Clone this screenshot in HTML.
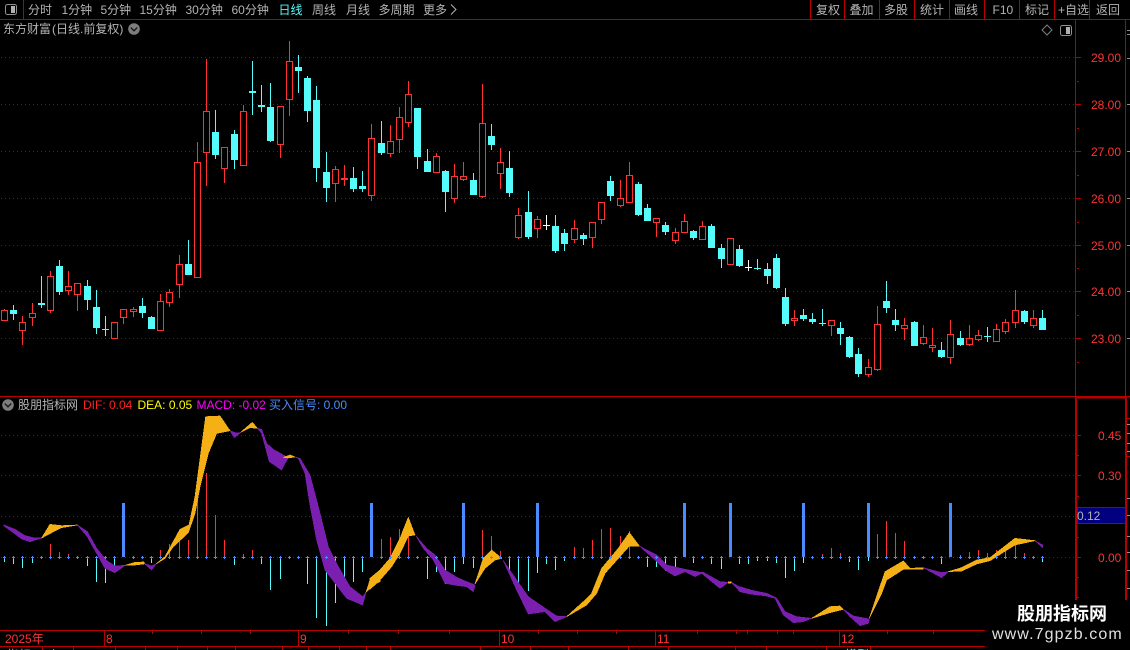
<!DOCTYPE html>
<html lang="zh"><head><meta charset="utf-8"><title>股朋指标网</title>
<style>
html,body{margin:0;padding:0;background:#000;width:1130px;height:650px;overflow:hidden}
svg{display:block}
text{font-family:"Liberation Sans","WenQuanYi Zen Hei","Noto Sans CJK SC",sans-serif;font-size:12px;white-space:pre}
.g{fill:#b4b4b4}.r{fill:#ff3232}
</style></head><body>
<svg xmlns="http://www.w3.org/2000/svg" width="1130" height="650" viewBox="0 0 1130 650">
<rect width="1130" height="650" fill="#000"/>
<!-- grid -->
<path shape-rendering="crispEdges" stroke="#a80000" stroke-dasharray="1 3" fill="none" d="M1 57.5H1075M1 104.5H1075M1 151.5H1075M1 198.5H1075M1 245.5H1075M1 291.5H1075M1 338.5H1075M1 435.5H1075M1 475.5H1075M1 516.5H1075M1 557.5H1075"/>
<!-- wicks -->
<g shape-rendering="crispEdges" fill="none">
<path stroke="#ff3232" d="M4.5 309V311M22.5 316V345M32.5 303V326M50.5 271V313M68.5 271V295M77.5 283V311M123.5 309V324M133.5 307V317M160.5 294V331M169.5 289V307M179.5 255V298M197.5 142V278M206.5 59V186M224.5 147V183M243.5 105V166M280.5 106V158M289.5 41V116M335.5 166V202M344.5 165V186M371.5 124V201M390.5 125V157M399.5 107V153M408.5 81V127M436.5 153V173M454.5 164V203M463.5 162V181M482.5 84V198M500.5 148V189M518.5 208V239M537.5 216V238M574.5 220V243M592.5 222V248M601.5 202V224M620.5 180V207M629.5 162V203M656.5 218V237M675.5 228V244M684.5 214V233M702.5 221V240M794.5 310V326M831.5 320V336M868.5 359V377M877.5 306V371M904.5 318V340M923.5 325V345M932.5 328V352M950.5 320V364M969.5 325V346M978.5 330V341M996.5 324V342M1005.5 319V334M1015.5 290V328M1033.5 310V328"/>
<path stroke="#54fcfc" d="M13.5 305V320M41.5 276V308M59.5 260V295M87.5 280V310M96.5 290V334M105.5 316V336M142.5 298V318M151.5 316V329M188.5 240V275M215.5 110V159M234.5 130V169M252.5 61V115M261.5 85V112M270.5 83V142M298.5 55V93M307.5 76V122M316.5 86V182M326.5 152V202M353.5 167V192M362.5 171V192M381.5 121V155M417.5 108V169M427.5 149V172M445.5 170V212M473.5 173V195M491.5 124V150M509.5 151V197M528.5 191V239M555.5 215V253M564.5 229V251M583.5 233V245M610.5 176V201M638.5 182V216M647.5 204V221M665.5 222V235M693.5 230V240M711.5 224V248M721.5 244V268M739.5 245V267M757.5 259V270M767.5 263V284M776.5 254V289M785.5 288V326M803.5 309V321M812.5 313V324M822.5 309V326M840.5 322V345M849.5 336V358M858.5 348V377M886.5 281V313M895.5 309V331M914.5 321V346M941.5 342V358M960.5 331V346M987.5 327V342M1024.5 310V324M1042.5 310V330"/>
<path stroke="#fff" d="M546.5 215V230M543 225.5H550M748.5 260V271M745 267.5H752"/>
<!-- red bodies -->
<path stroke="#ff3232" fill="#000" d="M1.5 310.5h6v10h-6zM19.5 322.5h6v8h-6zM29.5 313.5h6v4h-6zM47.5 276.5h6v34h-6zM65.5 286.5h6v4h-6zM74.5 283.5h6v11h-6zM111.5 322.5h6v16h-6zM120.5 309.5h6v8h-6zM130.5 309.5h6v2h-6zM157.5 301.5h6v29h-6zM166.5 292.5h6v10h-6zM176.5 264.5h6v20h-6zM194.5 162.5h6v115h-6zM203.5 111.5h6v41h-6zM221.5 147.5h6v21h-6zM240.5 111.5h6v54h-6zM277.5 106.5h6v38h-6zM286.5 61.5h6v38h-6zM332.5 169.5h6v14h-6zM341.5 178.5h6v1h-6zM368.5 138.5h6v57h-6zM387.5 141.5h6v12h-6zM396.5 117.5h6v22h-6zM405.5 94.5h6v28h-6zM433.5 156.5h6v16h-6zM451.5 176.5h6v22h-6zM460.5 176.5h6v3h-6zM479.5 123.5h6v73h-6zM497.5 162.5h6v11h-6zM515.5 215.5h6v22h-6zM534.5 219.5h6v9h-6zM571.5 228.5h6v11h-6zM589.5 222.5h6v15h-6zM598.5 202.5h6v17h-6zM617.5 198.5h6v7h-6zM626.5 175.5h6v27h-6zM653.5 218.5h6v4h-6zM672.5 232.5h6v8h-6zM681.5 221.5h6v11h-6zM699.5 226.5h6v13h-6zM727.5 238.5h6v26h-6zM791.5 318.5h6v2h-6zM828.5 320.5h6v5h-6zM865.5 367.5h6v7h-6zM874.5 324.5h6v45h-6zM901.5 325.5h6v3h-6zM920.5 337.5h6v6h-6zM929.5 345.5h6v2h-6zM947.5 334.5h6v23h-6zM966.5 338.5h6v6h-6zM975.5 335.5h6v4h-6zM993.5 329.5h6v12h-6zM1002.5 322.5h6v9h-6zM1012.5 310.5h6v12h-6zM1030.5 318.5h6v7h-6z"/>
<!-- cyan bodies -->
<path fill="#54fcfc" stroke="none" d="M10 310h7v4h-7zM38 303h7v2h-7zM56 266h7v26h-7zM84 286h7v14h-7zM93 307h7v21h-7zM102 329h7v1h-7zM139 306h7v7h-7zM148 317h7v12h-7zM185 264h7v11h-7zM212 132h7v23h-7zM231 134h7v26h-7zM249 91h7v2h-7zM258 105h7v2h-7zM267 107h7v34h-7zM295 67h7v4h-7zM304 78h7v33h-7zM313 100h7v68h-7zM323 172h7v16h-7zM350 178h7v11h-7zM359 186h7v3h-7zM378 143h7v10h-7zM414 108h7v49h-7zM424 161h7v11h-7zM442 171h7v21h-7zM470 180h7v15h-7zM488 136h7v9h-7zM506 168h7v25h-7zM525 212h7v25h-7zM552 226h7v25h-7zM561 233h7v11h-7zM580 235h7v4h-7zM607 181h7v15h-7zM635 184h7v31h-7zM644 208h7v13h-7zM662 225h7v7h-7zM690 231h7v7h-7zM708 226h7v22h-7zM718 248h7v11h-7zM736 249h7v17h-7zM754 268h7v1h-7zM764 269h7v7h-7zM773 258h7v30h-7zM782 297h7v27h-7zM800 315h7v4h-7zM809 319h7v3h-7zM819 323h7v1h-7zM837 328h7v6h-7zM846 337h7v20h-7zM855 354h7v20h-7zM883 301h7v7h-7zM892 320h7v5h-7zM911 322h7v24h-7zM938 350h7v7h-7zM957 338h7v7h-7zM984 336h7v1h-7zM1021 311h7v11h-7zM1039 318h7v12h-7z"/>
</g>
<!-- MACD bars -->
<path shape-rendering="crispEdges" fill="none" stroke="#ff3232" d="M50.5 557V544M59.5 557V552M68.5 557V554M160.5 557V550M169.5 557V544M179.5 557V531M188.5 557V540M197.5 557V493M206.5 557V473M215.5 557V515M224.5 557V540M243.5 557V554M252.5 557V550M381.5 557V539M390.5 557V537M399.5 557V529M408.5 557V522M482.5 557V530M491.5 557V536M500.5 557V551M574.5 557V547M583.5 557V548M592.5 557V540M601.5 557V529M610.5 557V528M620.5 557V536M629.5 557V531M822.5 557V554M831.5 557V548M840.5 557V553M877.5 557V534M886.5 557V521M895.5 557V533M904.5 557V541M960.5 557V555M969.5 557V552M978.5 557V550M987.5 557V553M996.5 557V550M1005.5 557V550M1015.5 557V544M1024.5 557V553"/>
<path shape-rendering="crispEdges" fill="none" stroke="#54fcfc" d="M4.5 557V562M13.5 557V564M22.5 557V568M32.5 557V563M87.5 557V566M96.5 557V582M105.5 557V583M114.5 557V572M151.5 557V563M234.5 557V565M261.5 557V564M270.5 557V590M280.5 557V579M307.5 557V584M316.5 557V618M326.5 557V626M335.5 557V603M344.5 557V590M353.5 557V582M362.5 557V572M417.5 557V559M427.5 557V579M436.5 557V572M445.5 557V584M454.5 557V572M463.5 557V564M473.5 557V568M509.5 557V572M518.5 557V584M528.5 557V591M537.5 557V573M546.5 557V564M555.5 557V570M564.5 557V561M647.5 557V567M656.5 557V567M665.5 557V571M675.5 557V569M693.5 557V563M711.5 557V564M721.5 557V569M739.5 557V564M748.5 557V564M757.5 557V561M767.5 557V561M776.5 557V563M785.5 557V578M794.5 557V571M803.5 557V563M849.5 557V562M858.5 557V570M868.5 557V561M941.5 557V564M1042.5 557V562"/>
<path shape-rendering="crispEdges" fill="none" stroke="#4a8cff" stroke-width="3" d="M123.5 557V503M371.5 557V503M463.5 557V503M537.5 557V503M684.5 557V503M730.5 557V503M803.5 557V503M868.5 557V503M950.5 557V503"/>
<!-- ribbon -->
<g shape-rendering="crispEdges" stroke-width="2" stroke-linejoin="round">
<g transform="translate(0 390) scale(.33333)">
<g fill="#7a1fb0" stroke="#7a1fb0">
<polygon points="12,405 45,418 75,437 100,443 125,444 90,455 65,447 40,428 12,408"/>
<polygon points="232,405 262,425 290,475 320,512 345,528 375,526 345,548 315,535 290,490 262,440"/>
<polygon points="432,520 455,528 468,522 455,540"/>
<polygon points="690,122 705,128 722,128 703,143"/>
<polygon points="772,115 785,118 800,160 820,178 864,203 845,240 808,215 785,130"/>
<polygon points="885,201 900,205 930,255 955,350 985,470 1015,530 1050,590 1088,620 1098,607 1088,645 1040,625 975,540 950,450 930,345 915,250 895,205"/>
</g>
<g fill="#f5b015" stroke="#f5b015">
<polygon points="125,444 150,403 185,407 232,405 185,413 155,428"/>
<polygon points="375,526 405,517 432,516 432,522 405,525"/>
<polygon points="468,522 495,500 540,418 567,405 585,320 617,80 660,78 690,122 650,130 625,190 600,290 585,370 565,428 520,470 495,505"/>
<polygon points="722,127 757,97 772,115 750,113"/>
<polygon points="850,202 870,195 885,201 864,204"/>
<polygon points="1098,607 1110,570 1140,540 1140,575 1120,585"/>
</g>
</g>
<g transform="translate(370 490) scale(.33333)">
<g fill="#7a1fb0" stroke="#7a1fb0">
<polygon points="138,138 170,175 195,195 225,240 260,262 290,275 315,285 310,305 290,290 265,287 225,280 190,210 160,175"/>
<polygon points="400,212 440,270 475,320 530,358 560,378 590,380 555,395 525,365 475,372 440,300"/>
<polygon points="808,168 830,180 860,195 890,225 945,238 990,247 1000,247 1050,275 1075,277 1050,295 995,250 975,260 945,245 915,258 885,240 850,205"/>
<polygon points="1083,276 1115,295 1140,298 1140,312 1110,305"/>
</g>
<g fill="#f5b015" stroke="#f5b015">
<polygon points="0,265 30,240 60,205 90,145 115,82 135,135 115,138 90,190 65,230 30,270 0,298"/>
<polygon points="315,282 340,205 365,180 395,205 375,210 345,235"/>
<polygon points="590,380 640,335 665,310 695,235 745,175 778,128 808,168 778,168 745,205 705,250 680,310 650,345"/>
<polygon points="1075,275 1083,275 1083,279 1075,279"/>
</g>
</g>
<g transform="translate(740 490) scale(.33333)">
<g fill="#7a1fb0" stroke="#7a1fb0">
<polygon points="0,290 30,300 80,310 110,325 135,365 170,380 215,385 190,395 160,398 130,375 105,325 80,318 30,312 0,305"/>
<polygon points="310,358 340,378 388,387 385,400 360,407 330,380"/>
<polygon points="550,233 605,248 625,245 605,263"/>
<polygon points="885,152 908,165 908,173"/>
</g>
<g fill="#f5b015" stroke="#f5b015">
<polygon points="215,385 270,350 300,348 310,358 270,368"/>
<polygon points="388,385 435,245 490,213 510,235 550,233 550,238 490,238 440,270 425,310"/>
<polygon points="625,245 665,233 710,210 750,203 825,145 885,152 825,165 750,212 710,222 665,243"/>
</g>
</g>
</g>
<!-- baseline markers -->
<path shape-rendering="crispEdges" fill="none" stroke="#4a8cff" d="M3 557.5h3M4.5 556v3M12 557.5h3M13.5 556v3M21 557.5h3M22.5 556v3M31 557.5h3M32.5 556v3M40 557.5h3M41.5 556v3M49 557.5h3M50.5 556v3M58 557.5h3M59.5 556v3M67 557.5h3M68.5 556v3M76 557.5h3M77.5 556v3M86 557.5h3M87.5 556v3M95 557.5h3M96.5 556v3M104 557.5h3M105.5 556v3M113 557.5h3M114.5 556v3M132 557.5h3M133.5 556v3M141 557.5h3M142.5 556v3M150 557.5h3M151.5 556v3M159 557.5h3M160.5 556v3M168 557.5h3M169.5 556v3M178 557.5h3M179.5 556v3M187 557.5h3M188.5 556v3M196 557.5h3M197.5 556v3M205 557.5h3M206.5 556v3M214 557.5h3M215.5 556v3M223 557.5h3M224.5 556v3M233 557.5h3M234.5 556v3M242 557.5h3M243.5 556v3M251 557.5h3M252.5 556v3M260 557.5h3M261.5 556v3M269 557.5h3M270.5 556v3M279 557.5h3M280.5 556v3M288 557.5h3M289.5 556v3M297 557.5h3M298.5 556v3M306 557.5h3M307.5 556v3M315 557.5h3M316.5 556v3M325 557.5h3M326.5 556v3M334 557.5h3M335.5 556v3M343 557.5h3M344.5 556v3M352 557.5h3M353.5 556v3M361 557.5h3M362.5 556v3M380 557.5h3M381.5 556v3M389 557.5h3M390.5 556v3M398 557.5h3M399.5 556v3M407 557.5h3M408.5 556v3M416 557.5h3M417.5 556v3M426 557.5h3M427.5 556v3M435 557.5h3M436.5 556v3M444 557.5h3M445.5 556v3M453 557.5h3M454.5 556v3M472 557.5h3M473.5 556v3M481 557.5h3M482.5 556v3M490 557.5h3M491.5 556v3M499 557.5h3M500.5 556v3M508 557.5h3M509.5 556v3M517 557.5h3M518.5 556v3M527 557.5h3M528.5 556v3M545 557.5h3M546.5 556v3M554 557.5h3M555.5 556v3M563 557.5h3M564.5 556v3M573 557.5h3M574.5 556v3M582 557.5h3M583.5 556v3M591 557.5h3M592.5 556v3M600 557.5h3M601.5 556v3M609 557.5h3M610.5 556v3M619 557.5h3M620.5 556v3M628 557.5h3M629.5 556v3M637 557.5h3M638.5 556v3M646 557.5h3M647.5 556v3M655 557.5h3M656.5 556v3M664 557.5h3M665.5 556v3M674 557.5h3M675.5 556v3M692 557.5h3M693.5 556v3M701 557.5h3M702.5 556v3M710 557.5h3M711.5 556v3M720 557.5h3M721.5 556v3M738 557.5h3M739.5 556v3M747 557.5h3M748.5 556v3M756 557.5h3M757.5 556v3M766 557.5h3M767.5 556v3M775 557.5h3M776.5 556v3M784 557.5h3M785.5 556v3M793 557.5h3M794.5 556v3M811 557.5h3M812.5 556v3M821 557.5h3M822.5 556v3M830 557.5h3M831.5 556v3M839 557.5h3M840.5 556v3M848 557.5h3M849.5 556v3M857 557.5h3M858.5 556v3M876 557.5h3M877.5 556v3M885 557.5h3M886.5 556v3M894 557.5h3M895.5 556v3M903 557.5h3M904.5 556v3M913 557.5h3M914.5 556v3M922 557.5h3M923.5 556v3M931 557.5h3M932.5 556v3M940 557.5h3M941.5 556v3M959 557.5h3M960.5 556v3M968 557.5h3M969.5 556v3M977 557.5h3M978.5 556v3M986 557.5h3M987.5 556v3M995 557.5h3M996.5 556v3M1004 557.5h3M1005.5 556v3M1014 557.5h3M1015.5 556v3M1023 557.5h3M1024.5 556v3M1032 557.5h3M1033.5 556v3M1041 557.5h3M1042.5 556v3"/>
<!-- frame lines -->
<g shape-rendering="crispEdges" fill="none" stroke="#b80000">
<path d="M0 19.5H1130M23.5 0V19M810.5 0V19M844.5 0V19M879.5 0V19M914.5 0V19M949.5 0V19M984.5 0V19M1019.5 0V19M1054.5 0V19M1089.5 0V19"/>
<path d="M0 396.5H1130M0 630.5H1130M0 646.5H1130"/>
<path d="M1075.5 19V397M1125.5 19V397"/>
<path stroke-width="2" d="M1076 397V650M1126 397V650M1076 397.5H1126"/>
<path d="M104.5 630V646M298.5 630V646M499.5 630V646M655.5 630V646M839.5 630V646"/>
<path d="M152.5 631V634M201.5 631V634M250.5 631V634M348.5 631V634M398.5 631V634M449.5 631V634M538.5 631V634M577.5 631V634M616.5 631V634M697.5 631V634M736.5 631V634M777.5 631V634M747.5 631V634M793.5 631V634M887.5 631V634M933.5 631V634"/>
<path d="M42.5 646V650M73.5 646V650M115.5 646V650M145.5 646V650M177.5 646V650M207.5 646V650M235.5 646V650M282.5 646V650M308.5 646V650M339.5 646V650M366.5 646V650M390.5 646V650M480.5 646V650M530.5 646V650M568.5 646V650M628.5 646V650M668.5 646V650M735.5 646V650M766.5 646V650M826.5 646V650M870.5 646V650"/>
<path d="M1076 57.5H1081M1076 104.5H1081M1076 151.5H1081M1076 198.5H1081M1076 245.5H1081M1076 291.5H1081M1076 338.5H1081M1077 81.5H1079M1077 128.5H1079M1077 175.5H1079M1077 222.5H1079M1077 268.5H1079M1077 315.5H1079M1077 362.5H1079"/>
<path d="M1076 435.5H1081M1076 475.5H1081M1076 557.5H1081M1077 455.5H1079M1077 496.5H1079M1077 537.5H1079M1077 577.5H1079M1077 597.5H1079M1127 418.5H1130M1127 456.5H1130"/>
</g>
<path shape-rendering="crispEdges" fill="none" stroke="#909090" d="M1127 30.5H1130M1127 34.5H1130M1127 58.5H1130M1127 104.5H1130M1127 151.5H1130M1127 198.5H1130M1127 245.5H1130M1127 291.5H1130M1127 338.5H1130M1127 424.5H1130M1127 433.5H1130M1127 443.5H1130M1127 451.5H1130M1127 498.5H1130M1127 515.5H1130M1127 536.5H1130M1127 552.5H1130M1127 570.5H1130M1127 588.5H1130"/>
<!-- value box -->
<rect x="1077.5" y="507.5" width="48" height="16" fill="#000080" stroke="#a00000" shape-rendering="crispEdges"/>
<text x="1077" y="520" class="g">0.12</text>
<!-- price labels -->
<g class="r">
<text x="1091" y="62" class="r">29.00</text><text x="1091" y="109" class="r">28.00</text><text x="1091" y="156" class="r">27.00</text><text x="1091" y="203" class="r">26.00</text><text x="1091" y="250" class="r">25.00</text><text x="1091" y="296" class="r">24.00</text><text x="1091" y="343" class="r">23.00</text>
<text x="1098" y="440" class="r">0.45</text><text x="1098" y="480" class="r">0.30</text><text x="1098" y="562" class="r">0.00</text>
</g>
<!-- toolbar -->
<rect x="5.5" y="4.5" width="11" height="10" rx="2" fill="none" stroke="#909090"/><rect x="11" y="6" width="4" height="7" fill="#b0b0b0"/>
<g class="g">
<text x="28" y="14" class="g">分时</text><text x="61.5" y="14" class="g">1分钟</text><text x="100.5" y="14" class="g">5分钟</text><text x="139.5" y="14" class="g">15分钟</text><text x="185.5" y="14" class="g">30分钟</text><text x="231.5" y="14" class="g">60分钟</text>
<text x="278.5" y="14" fill="#54fcfc">日线</text>
<text x="312" y="14" class="g">周线</text><text x="346" y="14" class="g">月线</text><text x="378.5" y="14" class="g">多周期</text><text x="423" y="14" class="g">更多</text>
<text x="816" y="14" class="g">复权</text><text x="849.5" y="14" class="g">叠加</text><text x="884" y="14" class="g">多股</text><text x="920" y="14" class="g">统计</text><text x="954" y="14" class="g">画线</text><text x="992.5" y="14" class="g">F10</text><text x="1025" y="14" class="g">标记</text><text x="1058" y="14" class="g">+自选</text><text x="1096" y="14" class="g">返回</text>
</g>
<path d="M451 4.5l5 5-5 5" fill="none" stroke="#b4b4b4"/>
<!-- header -->
<text x="3" y="33" class="g">东方财富<tspan x="52">(日线.前复权)</tspan></text>
<circle cx="134" cy="29" r="5.8" fill="#7d7d7d"/><path d="M130.8 27.6l3.2 3.2 3.2-3.2" fill="none" stroke="#111" stroke-width="1.3"/>
<path d="M1047 25l5 5-5 5-5-5z" fill="none" stroke="#808080"/>
<rect x="1060.5" y="25.5" width="11" height="10" rx="2" fill="none" stroke="#909090"/><rect x="1066" y="27" width="4" height="7" fill="#b0b0b0"/>
<!-- legend -->
<circle cx="8" cy="405" r="5.8" fill="#7d7d7d"/><path d="M4.8 403.6l3.2 3.2 3.2-3.2" fill="none" stroke="#111" stroke-width="1.3"/>
<text x="18" y="409" class="g">股朋指标网</text>
<text x="83" y="409" fill="#ff2020">DIF: 0.04</text>
<text x="137.5" y="409" fill="#ffff00">DEA: 0.05</text>
<text x="196.5" y="409" fill="#ff00ff">MACD: -0.02</text>
<text x="269" y="409" fill="#4a8cff">买入信号: 0.00</text>
<!-- time axis -->
<text x="5" y="643" class="r">2025年</text>
<text x="106" y="643" class="r">8</text><text x="300" y="643" class="r">9</text><text x="501" y="643" class="r">10</text><text x="657" y="643" class="r">11</text><text x="841" y="643" class="r">12</text>
<text x="7" y="659" class="g">指标</text><text x="48" y="659" class="g">上</text><text x="845" y="659" fill="#54fcfc">模型</text>
<!-- watermark -->
<rect x="985" y="600" width="145" height="50" fill="#000"/>
<text x="1017" y="620" style="font-size:18px;font-weight:bold" fill="#fff">股朋指标网</text>
<text x="992" y="639" style="font-size:16px;letter-spacing:1.1px" fill="#e0e0e0">www.7gpzb.com</text>
</svg>
</body></html>
